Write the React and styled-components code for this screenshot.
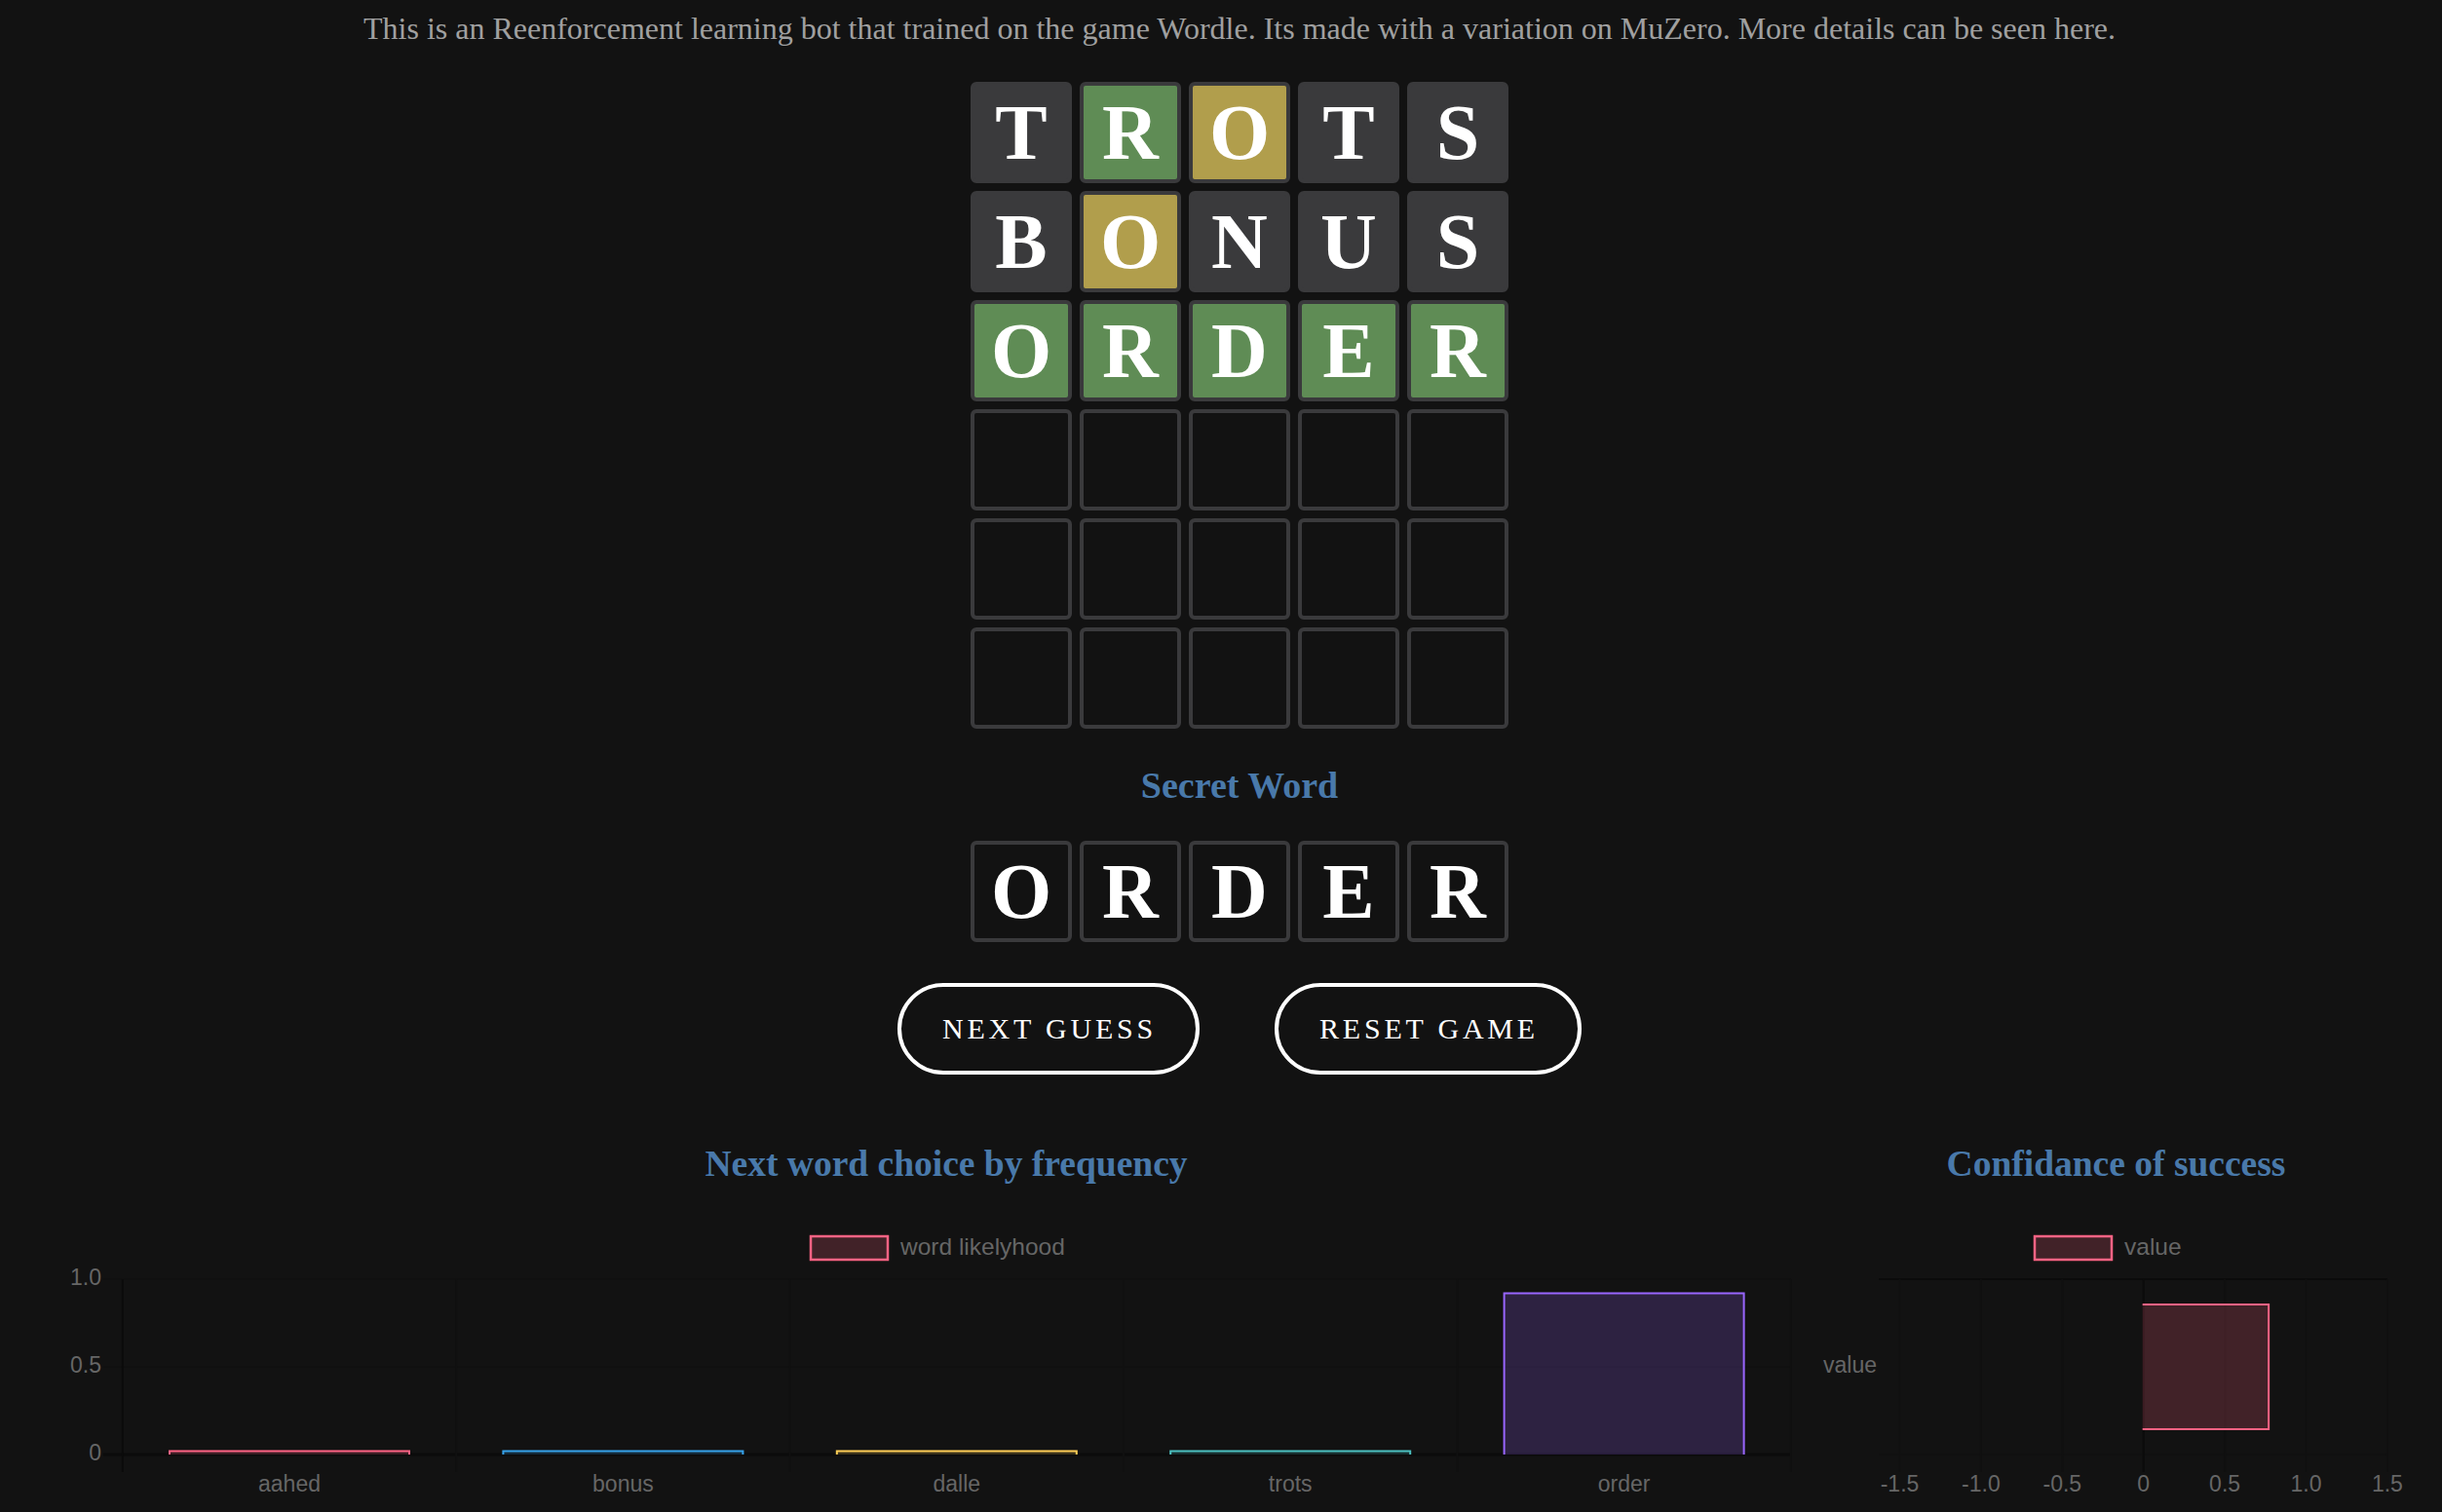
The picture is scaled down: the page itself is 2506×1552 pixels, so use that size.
import React from "react";
import styled, { createGlobalStyle } from "styled-components";

const GlobalStyle = createGlobalStyle`
  html, body {
    margin: 0;
    padding: 0;
    background: #121212;
  }
  body {
    font-family: "Liberation Serif", "Times New Roman", serif;
    overflow: hidden;
  }
`;

const board = [
  [["T", "absent"], ["R", "correct"], ["O", "present"], ["T", "absent"], ["S", "absent"]],
  [["B", "absent"], ["O", "present"], ["N", "absent"], ["U", "absent"], ["S", "absent"]],
  [["O", "correct"], ["R", "correct"], ["D", "correct"], ["E", "correct"], ["R", "correct"]],
  [],
  [],
  [],
];

const secret = ["O", "R", "D", "E", "R"];

const words = [
  { label: "aahed", value: 0.02, color: "255,99,132" },
  { label: "bonus", value: 0.02, color: "54,162,235" },
  { label: "dalle", value: 0.02, color: "255,206,86" },
  { label: "trots", value: 0.02, color: "75,192,192" },
  { label: "order", value: 0.92, color: "153,102,255" },
];

const tileBg = {
  correct: "#5f8c55",
  present: "#b19e4c",
  absent: "#3a3a3c",
  empty: "#121212",
};

const Page = styled.div`
  display: flex;
  flex-direction: column;
  min-height: 100vh;
`;

const Game = styled.section`
  display: flex;
  flex-direction: column;
  align-items: center;
  padding-left: 38px;
`;

const Intro = styled.p`
  margin: 12px 0 0;
  font-size: 32px;
  line-height: 35px;
  color: #a0a0a0;
  text-align: center;
  white-space: nowrap;
`;

const Board = styled.div`
  display: grid;
  grid-template-columns: repeat(5, 104px);
  grid-auto-rows: 104px;
  gap: 8px;
  margin-top: ${(p) => p.$top}px;
`;

const Tile = styled.div`
  box-sizing: border-box;
  width: 104px;
  height: 104px;
  border: 4px solid #3a3a3c;
  border-radius: 6px;
  background: ${(p) => tileBg[p.$status]};
  display: flex;
  align-items: center;
  justify-content: center;
  color: #ffffff;
  font-size: 80px;
  font-weight: 700;
  line-height: 1;
`;

const Heading = styled.h2`
  margin: ${(p) => p.$top || 0}px 0 0;
  font-size: ${(p) => p.$size || 38}px;
  line-height: 44px;
  font-weight: 700;
  color: #4979aa;
  text-align: center;
  width: ${(p) => (p.$width ? `${p.$width}px` : "auto")};
`;

const Buttons = styled.div`
  display: flex;
  gap: 77px;
  margin-top: 42px;
`;

const PillButton = styled.button`
  box-sizing: border-box;
  height: 94px;
  padding: 0 40px 0 42px;
  border: 4px solid #ffffff;
  border-radius: 47px;
  background: transparent;
  color: #ffffff;
  font-family: "Liberation Serif", "Times New Roman", serif;
  font-size: 30px;
  letter-spacing: 3.8px;
  text-transform: uppercase;
  cursor: pointer;
`;

const ChartRow = styled.section`
  display: flex;
  margin-top: 70px;
  padding-left: 8px;
`;

const Panel = styled.div`
  display: flex;
  flex-direction: column;
  width: ${(p) => p.$width}px;
  flex-shrink: 0;
`;

const ChartSvg = styled.svg`
  display: block;
  margin-top: 24px;
  overflow: visible;
  font-family: "Liberation Sans", Arial, sans-serif;
`;

const GRID = "#101010";
const AXIS = "#0b0b0b";
const TICK = "#666666";

// page y of the svg top, used to place things by the numbers read off the shot
const Y0 = 1240;

const Legend = ({ x, y, label }) => (
  <g>
    <rect
      x={x}
      y={y}
      width={79}
      height={24}
      fill="rgba(255,99,132,0.2)"
      stroke="rgb(255,99,132)"
      strokeWidth={2.5}
    />
    <text x={x + 92} y={y + 13} fontSize={24.5} fill={TICK} dominantBaseline="middle">
      {label}
    </text>
  </g>
);

const Bar = ({ x, y, w, h, color, skip }) => {
  const d =
    skip === "left"
      ? `M${x} ${y} H${x + w} V${y + h} H${x}`
      : `M${x} ${y + h} V${y} H${x + w} V${y + h}`;
  return (
    <g>
      <rect x={x} y={y} width={w} height={h} fill={`rgba(${color},0.2)`} />
      <path d={d} fill="none" stroke={`rgb(${color})`} strokeWidth={2} />
    </g>
  );
};

const WordChart = () => {
  const ox = 8;
  const left = 125.8 - ox;
  const step = 342.4;
  const top = 1312 - Y0;
  const zero = 1492 - Y0;
  const h = zero - top;
  return (
    <ChartSvg width={1926} height={312}>
      <Legend x={832 - ox} y={1268 - Y0} label="word likelyhood" />
      {[0, 0.5, 1].map((v) => {
        const y = zero - v * h;
        return (
          <g key={v}>
            <line x1={left - 20} x2={left + step * 5} y1={y} y2={y} stroke={v === 0 ? AXIS : GRID} strokeWidth={v === 0 ? 3 : 2} />
            <text x={104 - ox} y={y} fontSize={23} fill={TICK} textAnchor="end" dominantBaseline="middle">
              {v === 0 ? "0" : v.toFixed(1)}
            </text>
          </g>
        );
      })}
      {[0, 1, 2, 3, 4, 5].map((i) => (
        <line
          key={i}
          x1={left + i * step}
          x2={left + i * step}
          y1={top}
          y2={zero + 18}
          stroke={i === 0 ? AXIS : GRID}
          strokeWidth={2}
        />
      ))}
      {words.map((wd, i) => {
        const cx = left + (i + 0.5) * step;
        const bh = wd.value * h;
        return (
          <g key={wd.label}>
            <Bar x={cx - 123} y={zero - bh} w={246} h={bh} color={wd.color} />
            <text x={cx} y={1524 - Y0} fontSize={23} fill={TICK} textAnchor="middle" dominantBaseline="middle">
              {wd.label}
            </text>
          </g>
        );
      })}
    </ChartSvg>
  );
};

const ValueChart = () => {
  const ox = 1934;
  const x0 = 1949.5 - ox;
  const unit = 166.8;
  const zeroX = x0 + 1.5 * unit;
  const top = 1312 - Y0;
  const bottom = 1492 - Y0;
  const ticks = [-1.5, -1, -0.5, 0, 0.5, 1, 1.5];
  const value = 0.776;
  return (
    <ChartSvg width={572} height={312}>
      <Legend x={2088 - ox} y={1268 - Y0} label="value" />
      {[top, bottom].map((y) => (
        <line key={y} x1={1928 - ox} x2={x0 + 3 * unit} y1={y} y2={y} stroke={y === top ? AXIS : GRID} strokeWidth={2} />
      ))}
      {ticks.map((t) => {
        const x = zeroX + t * unit;
        return (
          <g key={t}>
            <line x1={x} x2={x} y1={top} y2={bottom + 18} stroke={t === 0 ? AXIS : GRID} strokeWidth={2} />
            <text x={x} y={1524 - Y0} fontSize={23} fill={TICK} textAnchor="middle" dominantBaseline="middle">
              {t === 0 ? "0" : t.toFixed(1)}
            </text>
          </g>
        );
      })}
      <text x={1926 - ox} y={(top + bottom) / 2} fontSize={23} fill={TICK} textAnchor="end" dominantBaseline="middle">
        value
      </text>
      <Bar x={zeroX - 1} y={1338 - Y0} w={value * unit} h={128} color="255,99,132" skip="left" />
    </ChartSvg>
  );
};

export default function App() {
  return (
    <Page>
      <GlobalStyle />
      <Game>
        <Intro>
          This is an Reenforcement learning bot that trained on the game Wordle. Its made with a variation on MuZero. More details can be seen here.
        </Intro>
        <Board $top={37}>
          {board.map((row, r) =>
            [0, 1, 2, 3, 4].map((c) => {
              const cell = row[c];
              return (
                <Tile key={`${r}-${c}`} $status={cell ? cell[1] : "empty"}>
                  {cell ? cell[0] : ""}
                </Tile>
              );
            })
          )}
        </Board>
        <Heading $top={36}>Secret Word</Heading>
        <Board $top={35}>
          {secret.map((l, i) => (
            <Tile key={i} $status="empty">
              {l}
            </Tile>
          ))}
        </Board>
        <Buttons>
          <PillButton>Next Guess</PillButton>
          <PillButton>Reset Game</PillButton>
        </Buttons>
      </Game>
      <ChartRow>
        <Panel $width={1926}>
          <Heading $size={37.5}>Next word choice by frequency</Heading>
          <WordChart />
        </Panel>
        <Panel $width={572}>
          <Heading $size={37.5} $width={475}>Confidance of success</Heading>
          <ValueChart />
        </Panel>
      </ChartRow>
    </Page>
  );
}
